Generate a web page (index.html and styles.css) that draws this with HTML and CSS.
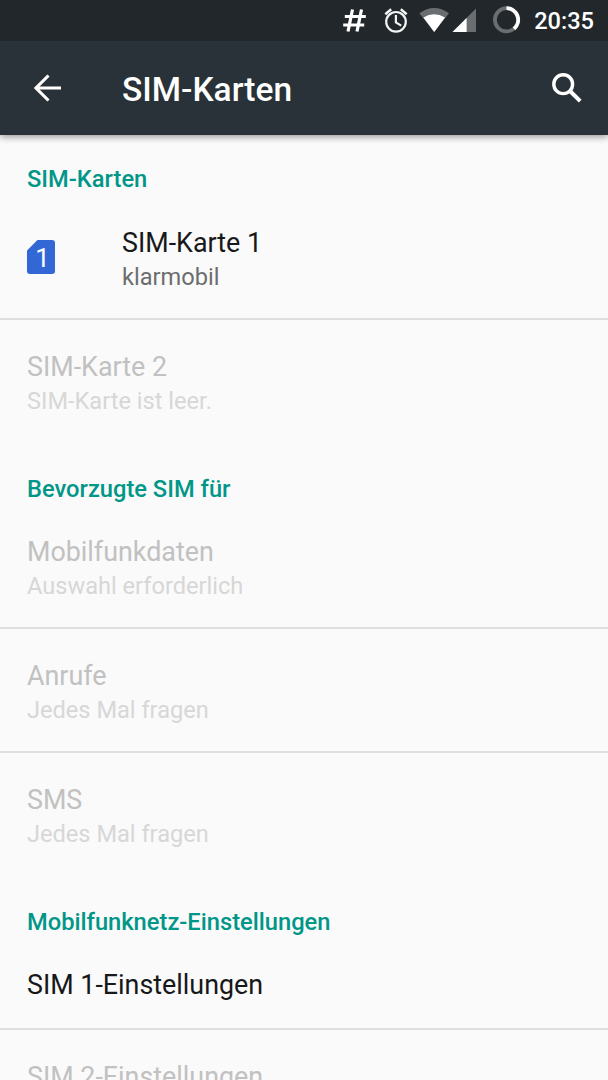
FILE: index.html
```html
<!DOCTYPE html>
<html lang="de">
<head>
<meta charset="utf-8">
<title>SIM-Karten</title>
<link rel="stylesheet" href="styles.css">
</head>
<body>
<header class="top">
  <div class="status">
    <svg class="status-icons" width="190" height="41" viewBox="335 0 190 41">
      <path d="M352.5 9.5L348 31.5M361.5 9.5L357 31.5M344.8 16.5H365.8M343.2 25H364.2" fill="none" stroke="#fff" stroke-width="3.2"/>
      <g fill="none" stroke="#f2f3f3" stroke-width="2.2">
        <circle cx="396" cy="21.8" r="9.8"/>
        <path d="M395.9 15V22.4L401.2 25.6"/>
        <path d="M385.3 14.2L391.2 9.3M406.7 14.2L400.8 9.3" stroke-width="2.5"/>
      </g>
      <path d="M419.4 13.2Q434.2 2.6 449 13.2L434.2 32Z" fill="#6a6e70"/>
      <path d="M423.4 17.6Q434.2 10.8 445 17.6L434.2 32Z" fill="#fff"/>
      <path d="M476 8.5V32H452.5Z" fill="#6a6e70"/>
      <path d="M466.6 17.9V32H452.5Z" fill="#fff"/>
      <circle cx="506.5" cy="19.8" r="11.6" fill="none" stroke="#6a6e70" stroke-width="3.8"/>
      <path d="M506.5 8.2A11.6 11.6 0 0 1 514 28.7" fill="none" stroke="#fff" stroke-width="3.8"/>
    </svg>
    <span class="clock">20:35</span>
  </div>
  <div class="appbar">
    <svg class="back" width="28" height="28" viewBox="0 0 28 28"><path d="M27 14H3M14.5 1.5L2 14L14.5 26.5" fill="none" stroke="#fff" stroke-width="3.1"/></svg>
    <h1>SIM-Karten</h1>
    <svg class="search" width="30" height="30" viewBox="0 0 30 30"><g fill="none" stroke="#fff"><circle cx="11.2" cy="11.2" r="9.4" stroke-width="3.4"/><path d="M18 18L28.2 28.2" stroke-width="4"/></g></svg>
  </div>
</header>
<main>
  <h2>SIM-Karten</h2>
  <div class="row with-icon">
    <svg class="sim" width="28" height="34" viewBox="0 0 28 34"><path d="M10.5 0H25Q28 0 28 3V31Q28 34 25 34H3Q0 34 0 31V10.5Z" fill="#3367d6"/><text class="sim-number" x="15.5" y="27" text-anchor="middle">1</text></svg>
    <div><div class="title">SIM-Karte 1</div><div class="summary">klarmobil</div></div>
  </div>
  <div class="row disabled last"><div class="title">SIM-Karte 2</div><div class="summary">SIM-Karte ist leer.</div></div>
  <h2>Bevorzugte SIM für</h2>
  <div class="row disabled"><div class="title">Mobilfunkdaten</div><div class="summary">Auswahl erforderlich</div></div>
  <div class="row disabled"><div class="title">Anrufe</div><div class="summary">Jedes Mal fragen</div></div>
  <div class="row disabled last"><div class="title">SMS</div><div class="summary">Jedes Mal fragen</div></div>
  <h2>Mobilfunknetz-Einstellungen</h2>
  <div class="row single"><div class="title">SIM 1-Einstellungen</div></div>
  <div class="row single disabled"><div class="title">SIM 2-Einstellungen</div></div>
</main>
</body>
</html>
```
FILE: styles.css
```css
* { box-sizing: border-box; }
body {
  margin: 0;
  height: 1080px;
  overflow: hidden;
  display: flex;
  flex-direction: column;
  background: #fafafa;
  color: #171819;
  font-family: Roboto, "Liberation Sans", sans-serif;
}
.top {
  flex: none;
  position: relative;
  color: #fff;
  box-shadow: 0 2px 7px rgba(0, 0, 0, .4);
}
.status {
  height: 41px;
  display: flex;
  justify-content: flex-end;
  background: #21272b;
  padding-right: 14px;
}
.status-icons { margin-right: 9px; }
.clock {
  font-size: 23.6px;
  font-weight: 500;
  line-height: 42px;
}
.appbar {
  height: 94px;
  display: flex;
  align-items: center;
  background: #283238;
  padding: 0 26px 0 34px;
}
h1 {
  margin: 4px 0 0 60px;
  font-size: 33.5px;
  line-height: 40px;
  font-weight: 500;
}
.search { margin-left: auto; }
main { flex: 1; min-height: 0; overflow: hidden; }
h2 {
  margin: 0;
  height: 61px;
  padding: 27.4px 27px 0;
  font-size: 23.7px;
  line-height: 34px;
  font-weight: 500;
  color: #009688;
}
.row {
  height: 124.1px;
  padding: 28.5px 27px 0;
  border-bottom: 2px solid #dedede;
}
.row.last { border-bottom: 0; }
.row.single { height: 92px; }
.with-icon { display: flex; gap: 67px; }
.sim { margin-top: 15.5px; }
.sim-number { font-size: 26px; fill: #fff; }
.title { font-size: 26.85px; line-height: 36px; }
.summary { font-size: 23.6px; line-height: 33px; color: #6b6d6e; }
.disabled .title { color: #c1c1c1; }
.disabled .summary { color: #d7d7d7; }
```
